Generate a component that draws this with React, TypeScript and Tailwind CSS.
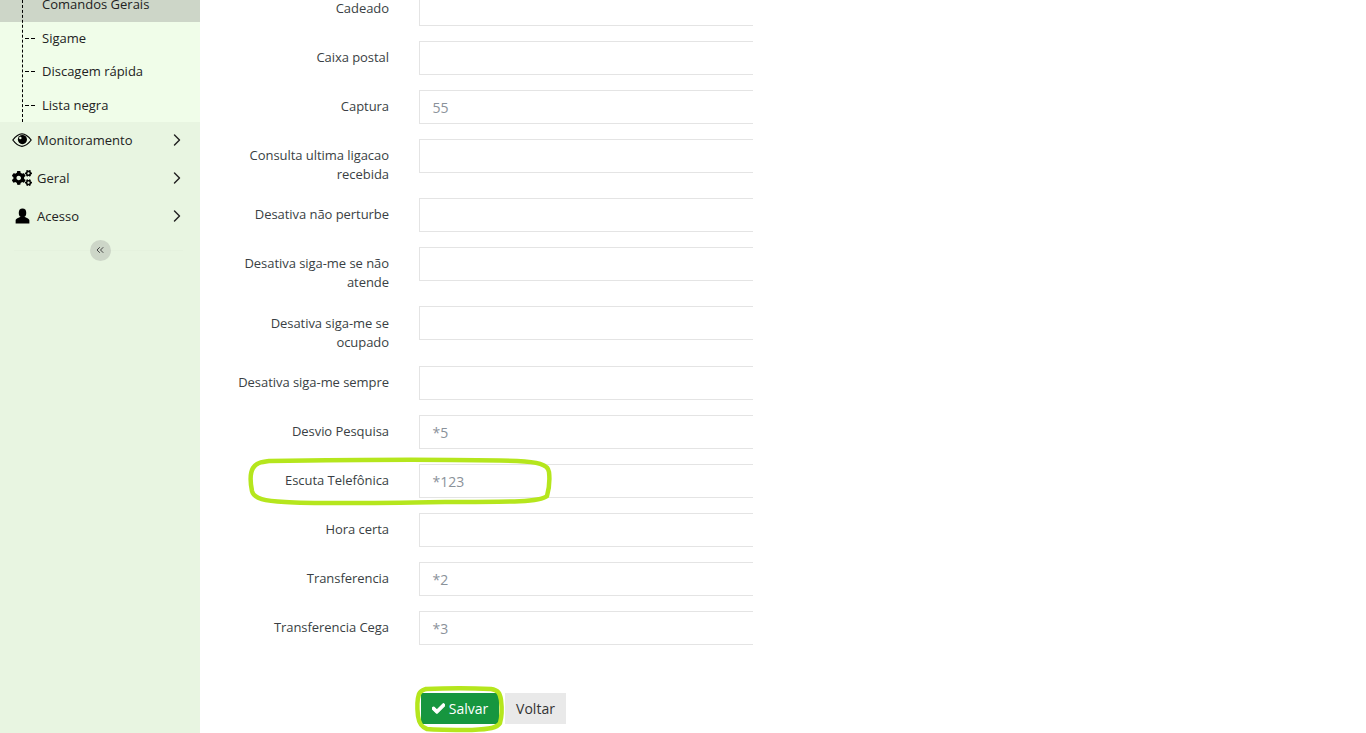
import { ChevronRight, ChevronsLeft } from 'lucide-react';
import { FaCheck, FaCogs } from 'react-icons/fa';

const fields = [
	{ label: 'Cadeado', value: '' },
	{ label: 'Caixa postal', value: '' },
	{ label: 'Captura', value: '55' },
	{ label: 'Consulta ultima ligacao recebida', value: '' },
	{ label: 'Desativa não perturbe', value: '' },
	{ label: 'Desativa siga-me se não atende', value: '' },
	{ label: 'Desativa siga-me se ocupado', value: '' },
	{ label: 'Desativa siga-me sempre', value: '' },
	{ label: 'Desvio Pesquisa', value: '*5' },
	{ label: 'Escuta Telefônica', value: '*123' },
	{ label: 'Hora certa', value: '' },
	{ label: 'Transferencia', value: '*2' },
	{ label: 'Transferencia Cega', value: '*3' },
];

const subItems = ['Sigame', 'Discagem rápida', 'Lista negra'];

const EyeIcon = () => (
	<svg className="w-[20px] h-[16px]" viewBox="0 0 24 18" fill="none">
		<path
			d="M1 9C5 3.500 9 1.500 12 1.500S19 3.500 23 9C19 14.500 15 16.500 12 16.500S5 14.500 1 9Z"
			stroke="currentColor"
			strokeWidth="1.5"
		/>
		<circle cx="12.500" cy="8.500" r="5.500" fill="currentColor" />
		<circle cx="10" cy="6.500" r="1.500" fill="#e8f5e1" />
	</svg>
);

const UserIcon = () => (
	<svg className="w-[15px] h-[16px]" viewBox="0 0 24 24" fill="currentColor">
		<ellipse cx="12" cy="7" rx="6" ry="7" />
		<path d="M1 24V19C1 15.500 6 15 8.500 13H15.500C18 15 23 15.500 23 19V24Z" />
	</svg>
);

const menuItems = [
	{ label: 'Monitoramento', icon: <EyeIcon /> },
	{ label: 'Geral', icon: <FaCogs className="w-[20px] h-[20px]" /> },
	{ label: 'Acesso', icon: <UserIcon /> },
];

export default function App() {
	return (
		<div className="relative flex w-[1366px] h-[733px] overflow-hidden bg-white text-[13px] leading-[19px] text-[#3a3f44] font-['Open_Sans',sans-serif]">
			<div className="flex flex-col w-[200px] shrink-0 bg-[#e8f5e1] text-black">
				<div className="relative bg-[#f0fde9]">
					<div className="absolute left-[22px] top-0 bottom-0 border-l border-dashed border-black"></div>
					<div className="flex items-end h-[22px] pl-[42px] pb-[8px] bg-[#cdd6c8] overflow-hidden">
						<span className="whitespace-nowrap text-[#222]">Comandos Gerais</span>
					</div>
					{subItems.map((item) => (
						<div key={item} className="flex items-center h-[33.3px] pl-[25px]">
							<span className="w-[4px] h-px bg-black"></span>
							<span className="w-[4px] h-px ml-[2px] mr-[7px] bg-black"></span>
							<span className="text-[#222]">{item}</span>
						</div>
					))}
				</div>
				{menuItems.map((item) => (
					<div key={item.label} className="flex items-center h-[38px] pb-[1px] text-[#222]">
						<span className="flex justify-center w-[20px] ml-[12px] mr-[5px] text-black">{item.icon}</span>
						<span>{item.label}</span>
						<ChevronRight className="w-[20px] h-[20px] ml-auto mr-[13px]" strokeWidth={1.7} />
					</div>
				))}
				<div className="relative flex justify-center mt-[4px]">
					<div className="absolute left-[14px] right-[17px] top-[10px] border-t border-[#e5f2de]"></div>
					<div className="relative flex items-center justify-center w-[21px] h-[21px] rounded-full bg-[#cdd6c8] text-[#444]">
						<ChevronsLeft className="w-[12px] h-[12px]" strokeWidth={2} />
					</div>
				</div>
			</div>

			<div className="w-[553px] overflow-hidden pl-[29px] -mt-[8.3px]">
				{fields.map((field) => (
					<div key={field.label} className="flex mb-[15px]">
						<label className="w-[160px] shrink-0 pt-[7.3px] -mb-[0.95px] text-right tracking-[-0.05px]">{field.label}</label>
						<div className="flex items-center w-[400px] h-[34px] ml-[30px] shrink-0 pl-[12.5px] pt-[1px] border border-[#e4e4e4] text-[14px] text-[#8a929a]">
							{field.value}
						</div>
					</div>
				))}
				<div className="flex mt-[48px] ml-[192px] text-[14px]">
					<button className="flex items-center justify-center w-[78px] h-[31px] bg-[#16963f] text-white">
						<FaCheck className="w-[13px] h-[13px] mr-[4px]" stroke="currentColor" strokeWidth={40} />
						Salvar
					</button>
					<button className="w-[61px] h-[31px] ml-[6px] bg-[#e9e9e9] text-[#333]">Voltar</button>
				</div>
			</div>

			<svg className="absolute left-[245px] top-[455px] w-[310px] h-[54px]" viewBox="0 0 310 54" fill="none">
				<path
					d="M24 6 C90 5 200 4 272 6 C292 7 303 9 304 17 C305 26 304 34 302 41 C295 47 270 47 200 47 C140 48 70 49 40 47 C20 46 9 44 7 36 C5 26 5 18 8 13 C11 8 16 7 24 6 Z"
					stroke="#b5e61d"
					strokeWidth="4.500"
				/>
			</svg>
			<svg className="absolute left-[412px] top-[682px] w-[95px] h-[51px]" viewBox="0 0 95 51" fill="none">
				<path
					d="M14 7 C35 6 60 6 79 7 C86 8 88 11 89 18 C90 26 90 34 88 41 C85 46 78 47 60 48 C40 48 25 48 15 47 C9 45 7 41 6 34 C5 26 5 18 7 12 C9 8 11 8 14 7 Z"
					stroke="#b5e61d"
					strokeWidth="4.500"
				/>
			</svg>
		</div>
	);
}
